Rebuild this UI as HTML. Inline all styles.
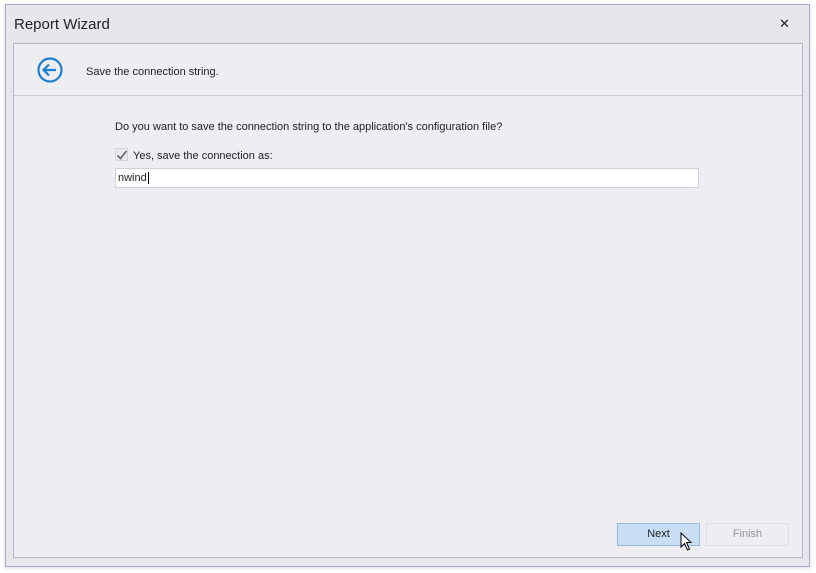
<!DOCTYPE html>
<html><head><style>
body{margin:0;width:816px;height:573px;background:#fff;font-family:"Liberation Sans",sans-serif;position:relative;overflow:hidden}
.win{position:absolute;left:5px;top:4px;width:803px;height:561px;border:1px solid #a9a9c8;background:#e6e6eb;box-shadow:0 1px 4px rgba(0,0,0,.15)}
.title{position:absolute;left:8px;top:11px;font-size:15px;color:#222}
.x{position:absolute;left:773px;top:11px;font-size:13px;color:#222}
.panel{position:absolute;left:7px;top:38px;width:788px;height:513px;border:1px solid #b4b4cc;background:#ededf2}
.hdr{position:absolute;left:0;top:0;width:788px;height:51px;border-bottom:1px solid #c8c8d8}
.t{position:absolute;font-size:11px;color:#222}
.inp{position:absolute;left:102px;top:124px;width:582px;height:18px;background:#fff;border:1px solid #d0d0dc}
.btn{position:absolute;top:479px;width:81px;height:21px;font-size:11px;text-align:center;line-height:21px}
</style></head><body>
<div class="win">
<div class="title">Report Wizard</div>
<div class="x">✕</div>
<div class="panel">
<div class="hdr">
<svg style="position:absolute;left:23px;top:13px" width="26" height="26" viewBox="0 0 26 26"><circle cx="13" cy="13" r="11.5" fill="none" stroke="#1e7fd0" stroke-width="2.2"/><path d="M19 13H7M12 7.5L6.5 13l5.5 5.5" fill="none" stroke="#1e7fd0" stroke-width="2.2"/></svg>
<div class="t" style="left:72px;top:22px">Save the connection string.</div>
</div>
<div class="t" style="left:101px;top:77px">Do you want to save the connection string to the application's configuration file?</div>
<div style="position:absolute;left:101px;top:104px;width:11px;height:11px;border:1px solid #d4d4de;background:#e8e8ee"></div>
<svg style="position:absolute;left:102px;top:105px" width="12" height="12" viewBox="0 0 12 12"><path d="M1.5 6.5L4.5 9.5L10.5 2" fill="none" stroke="#666" stroke-width="1.6"/></svg>
<div class="t" style="left:119px;top:106px">Yes, save the connection as:</div>
<div class="inp" style="left:101px"><span class="t" style="left:2px;top:3px">nwind<span style="border-left:1px solid #000;margin-left:1px"></span></span></div>
<div class="btn" style="left:603px;background:#c8def4;border:1px solid #98b8dc;color:#222">Next</div>
<div class="btn" style="left:692px;border:1px solid #dcdce6;color:#999">Finish</div>
<svg style="position:absolute;left:666px;top:488px" width="14" height="20" viewBox="0 0 14 20"><path d="M1 1V15L4.5 11.5L7.5 18L9.5 17L6.5 10.5H11Z" fill="#fff" stroke="#000" stroke-width="1"/></svg>
</div>
</div>
</body></html>
